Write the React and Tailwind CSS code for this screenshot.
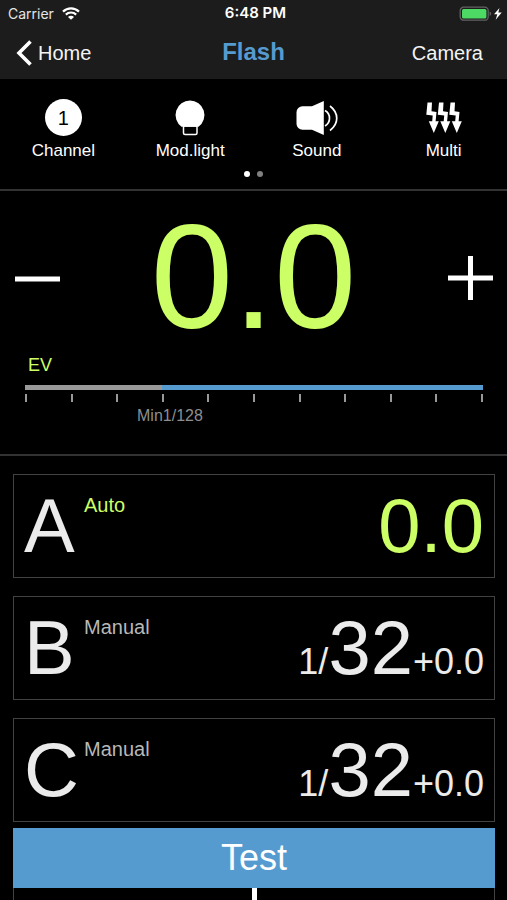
const tools = [
  { label: 'Channel', icon: ChannelIcon },
  { label: 'Mod.light', icon: BulbIcon },
  { label: 'Sound', icon: SoundIcon },
  { label: 'Multi', icon: MultiIcon },
];

const groups = [
  { name: 'A', mode: 'Auto', auto: true, value: '0.0' },
  { name: 'B', mode: 'Manual', prefix: '1/', value: '32', suffix: '+0.0' },
  { name: 'C', mode: 'Manual', prefix: '1/', value: '32', suffix: '+0.0' },
];

function ChannelIcon() {
  return (
    <span className="flex size-[37px] items-center justify-center rounded-full bg-white text-[20px] leading-none text-black">
      1
    </span>
  );
}

function BulbIcon() {
  return (
    <svg className="h-[38px] w-[38px]" viewBox="0 0 38 38" aria-hidden="true">
      <path
        d="M12.5 27v7a1.500 1.500 0 0 0 1.500 1.500h10.500a1.500 1.500 0 0 0 1.500-1.500V27z"
        fill="#000"
        stroke="#fff"
        strokeWidth="1.500"
      />
      <path d="M19 1.500a14.500 14.500 0 0 1 8.500 26.200h-17A14.500 14.500 0 0 1 19 1.500z" fill="#fff" />
    </svg>
  );
}

function SoundIcon() {
  return (
    <svg className="h-[38px] w-[44px]" viewBox="0 0 44 38" aria-hidden="true">
      <path d="M17 7.300 28.800 2v34L17 30.700z" fill="#fff" />
      <path d="M7.500 7.300H17.500v23.400H7.500a6 6 0 0 1-6-6V13.300a6 6 0 0 1 6-6z" fill="#fff" />
      <g fill="none" stroke="#fff" strokeWidth="1.700">
        <path d="M30 11.500c6 3.500 6 12 0 15.500" />
        <path d="M35 7c9 7 9 17.500 0 24.500" />
      </g>
    </svg>
  );
}

function MultiIcon() {
  const bolt = 'M3.500 3.500h4.500l-.5 8.800 5 .7-.9 9.300h3.200L9.800 34 4.800 22.300h3.400l.5-5.800-6.400-.8z';
  return (
    <svg className="h-[38px] w-[40px]" viewBox="0 0 40 38" fill="#fff" aria-hidden="true">
      <path d={bolt} />
      <path d={bolt} transform="translate(11.500 0)" />
      <path d={bolt} transform="translate(23 0)" />
    </svg>
  );
}

function StatusBar() {
  return (
    <div className="grid h-[27px] grid-cols-3 items-center pr-1 pl-2 font-[Inter,sans-serif] text-[14px] text-[#e4e4e4]">
      <div className="flex items-center gap-2">
        <span>Carrier</span>
        <svg className="h-[13px] w-[18px]" viewBox="0 0 18 13" aria-label="Wi-Fi">
          <g fill="none" stroke="#fff" strokeWidth="2.200">
            <path d="M1 4.600a11.500 11.500 0 0 1 16 0" />
            <path d="M3.800 7.600a7.500 7.500 0 0 1 10.400 0" />
          </g>
          <path d="M9 12.800 6 9.900a4.200 4.200 0 0 1 6 0z" fill="#fff" />
        </svg>
      </div>
      <span className="text-center text-[15px] font-semibold text-white">6:48 PM</span>
      <svg className="h-[16px] w-[44px] justify-self-end" viewBox="0 0 44 16" aria-label="Battery charging">
        <rect x="1.200" y="1.200" width="28" height="13" rx="3.500" fill="none" stroke="#626262" strokeWidth="1.300" />
        <rect x="3" y="3" width="24.400" height="9.400" rx="1.500" fill="#4cd964" />
        <path d="M30.600 5.500v4.400q1.600-.6 1.600-2.200t-1.600-2.200z" fill="#626262" />
        <path d="M40.500 2 35 8.300h3.300L36.700 13.800l6-7.300h-3.400z" fill="#fff" />
      </svg>
    </div>
  );
}

function NavBar() {
  return (
    <nav className="grid h-[52px] grid-cols-3 items-center pr-6 pl-4 text-[20px] leading-[50px] text-[#f4f4f4]">
      <a href="#home" className="flex items-center gap-1.5">
        <svg className="h-[26px] w-[16px]" viewBox="0 0 16 26" aria-hidden="true">
          <path d="M14.500 1.500 3 13l11.500 11.500" fill="none" stroke="#fff" strokeWidth="3.600" />
        </svg>
        Home
      </a>
      <h1 className="pb-0.5 pl-2 text-center text-[24px] font-bold text-[#569bd0]">Flash</h1>
      <a href="#camera" className="text-right">
        Camera
      </a>
    </nav>
  );
}

function GroupCard({ name, mode, auto, prefix, value, suffix }) {
  return (
    <button
      type="button"
      className="flex h-[104px] w-full border border-[#424242] pr-2.5 pl-2.5 text-left text-[#ebebeb]"
    >
      <span className="w-[60px] text-[76px] leading-[102px]">{name}</span>
      <span className={`pt-4 text-[20px] leading-7 ${auto ? 'text-[#ccff66]' : 'text-[#b8b8b8]'}`}>{mode}</span>
      <span className={`ml-auto text-[36px] leading-[102px] whitespace-nowrap ${auto ? 'text-[#ccff66]' : ''}`}>
        {prefix}
        <span className="text-[76px]">{value}</span>
        {suffix}
      </span>
    </button>
  );
}

export default function App() {
  return (
    <div className="flex min-h-screen flex-col bg-black font-['Liberation_Sans',Arial,sans-serif] text-white">
      <header className="bg-[#1c1c1c]">
        <StatusBar />
        <NavBar />
      </header>

      <section className="border-b-2 border-[#323232] pt-5 pb-3">
        <div className="grid grid-cols-4">
          {tools.map(({ label, icon: Icon }) => (
            <button key={label} type="button" className="flex flex-col items-center text-[17px] leading-6">
              <span className="flex h-10 items-start">
                <Icon />
              </span>
              {label}
            </button>
          ))}
        </div>
        <div className="mt-2 flex justify-center gap-[7px]">
          <span className="size-1.5 rounded-full bg-white" />
          <span className="size-1.5 rounded-full bg-[#808080]" />
        </div>
      </section>

      <section className="border-b-2 border-[#323232] pt-2.5 pb-[26px]">
        <div className="flex h-[152px] items-center justify-between px-3.5">
          <button type="button" aria-label="Decrease">
            <svg className="size-[46px]" viewBox="0 0 46 46" aria-hidden="true">
              <path d="M1 25h45" stroke="#fff" strokeWidth="5" />
            </svg>
          </button>
          <output className="text-[148px] leading-[152px] text-[#ccff66]">0.0</output>
          <button type="button" aria-label="Increase">
            <svg className="size-[46px]" viewBox="0 0 46 46" aria-hidden="true">
              <path d="M1 24h45M23.500 2v44" stroke="#fff" strokeWidth="5" />
            </svg>
          </button>
        </div>
        <div className="pr-6 pl-[25px]">
          <label htmlFor="ev" className="block pl-[3px] text-[18px] leading-6 text-[#ccff66]">
            EV
          </label>
          <input
            id="ev"
            type="range"
            min="0"
            max="10"
            defaultValue="10"
            className="mt-2 block h-[5px] w-full appearance-none bg-[linear-gradient(to_right,#999999_30%,#569bd0_30%)] [&::-webkit-slider-thumb]:size-0 [&::-webkit-slider-thumb]:appearance-none"
          />
          <div className="mt-1 flex justify-between">
            {Array.from({ length: 11 }, (_, i) => (
              <span key={i} className="h-2 w-0.5 bg-[#999999]" />
            ))}
          </div>
          <p className="mt-0.5 ml-28 text-[16px] leading-6 text-[#8e8e8e]">Min1/128</p>
        </div>
      </section>

      <main className="flex flex-1 flex-col pt-[18px] pr-3 pl-[13px]">
        <div className="flex flex-col gap-[18px]">
          {groups.map((group) => (
            <GroupCard key={group.name} {...group} />
          ))}
        </div>
        <button type="button" className="mt-1.5 h-[60px] bg-[#569bd0] text-[36px] leading-[60px] text-white">
          Test
        </button>
        <div className="flex min-h-3 flex-1 justify-center border-x border-[#424242]">
          <span className="w-[5px] bg-white" />
        </div>
      </main>
    </div>
  );
}
